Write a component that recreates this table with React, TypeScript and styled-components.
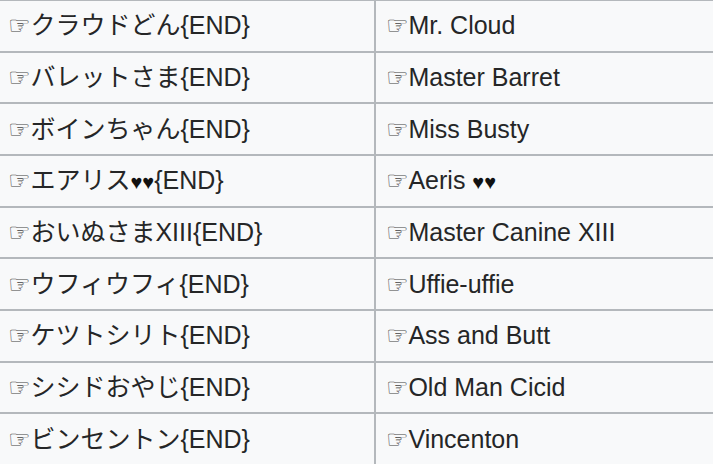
import React from 'react';
import { createGlobalStyle, styled } from 'styled-components';

const GlobalStyle = createGlobalStyle`
  html, body {
    margin: 0;
    padding: 0;
    background: #f8f9fa;
    overflow: hidden;
  }
`;

interface NameRow {
  jp: string;
  en: string;
}

const rows: NameRow[] = [
  { jp: 'クラウドどん', en: 'Mr. Cloud' },
  { jp: 'バレットさま', en: 'Master Barret' },
  { jp: 'ボインちゃん', en: 'Miss Busty' },
  { jp: 'エアリス♥♥', en: 'Aeris ♥♥' },
  { jp: 'おいぬさまXIII', en: 'Master Canine XIII' },
  { jp: 'ウフィウフィ', en: 'Uffie-uffie' },
  { jp: 'ケツトシリト', en: 'Ass and Butt' },
  { jp: 'シシドおやじ', en: 'Old Man Cicid' },
  { jp: 'ビンセントン', en: 'Vincenton' },
];

// hearts in the reference are drawn a bit smaller than the text
const withHearts = (text: string) =>
  text.split(/(♥+)/).map((part, i) =>
    part.startsWith('♥') ? <Heart key={i}>{part}</Heart> : part
  );

const App: React.FC = () => {
  return (
    <>
      <GlobalStyle />
      <Table>
        {rows.map((row) => (
          <Row key={row.en}>
            <Cell $pad={8}>
              <Line>
                <Hand>☞</Hand>
                {withHearts(row.jp)}
                {'{END}'}
              </Line>
            </Cell>
            <Cell $pad={10} $divider>
              <Line>
                <Hand>☞</Hand>
                {withHearts(row.en)}
              </Line>
            </Cell>
          </Row>
        ))}
      </Table>
    </>
  );
};

export default App;

const Table = styled.div`
  display: flex;
  flex-direction: column;
  width: 713px;
  margin-top: -1px;
  background: #f8f9fa;
  color: #252627;
  font-family: 'Liberation Sans', 'DejaVu Sans', 'Noto Sans CJK JP', sans-serif;
  font-size: 25px;
`;

const Row = styled.div`
  display: grid;
  grid-template-columns: 374px 1fr;
  height: 51.67px;
  box-sizing: border-box;
  border-top: 2px solid #b4b8bc;
`;

const Cell = styled.div<{ $pad: number; $divider?: boolean }>`
  display: flex;
  align-items: center;
  padding-left: ${(p) => p.$pad}px;
  border-left: ${(p) => (p.$divider ? '2px solid #b4b8bc' : 'none')};
`;

const Line = styled.span`
  white-space: nowrap;
  line-height: 1;
`;

const Hand = styled.span`
  font-family: 'DejaVu Sans', sans-serif;
  color: #444;
`;

const Heart = styled.span`
  font-size: 20px;
  color: #111;
`;
